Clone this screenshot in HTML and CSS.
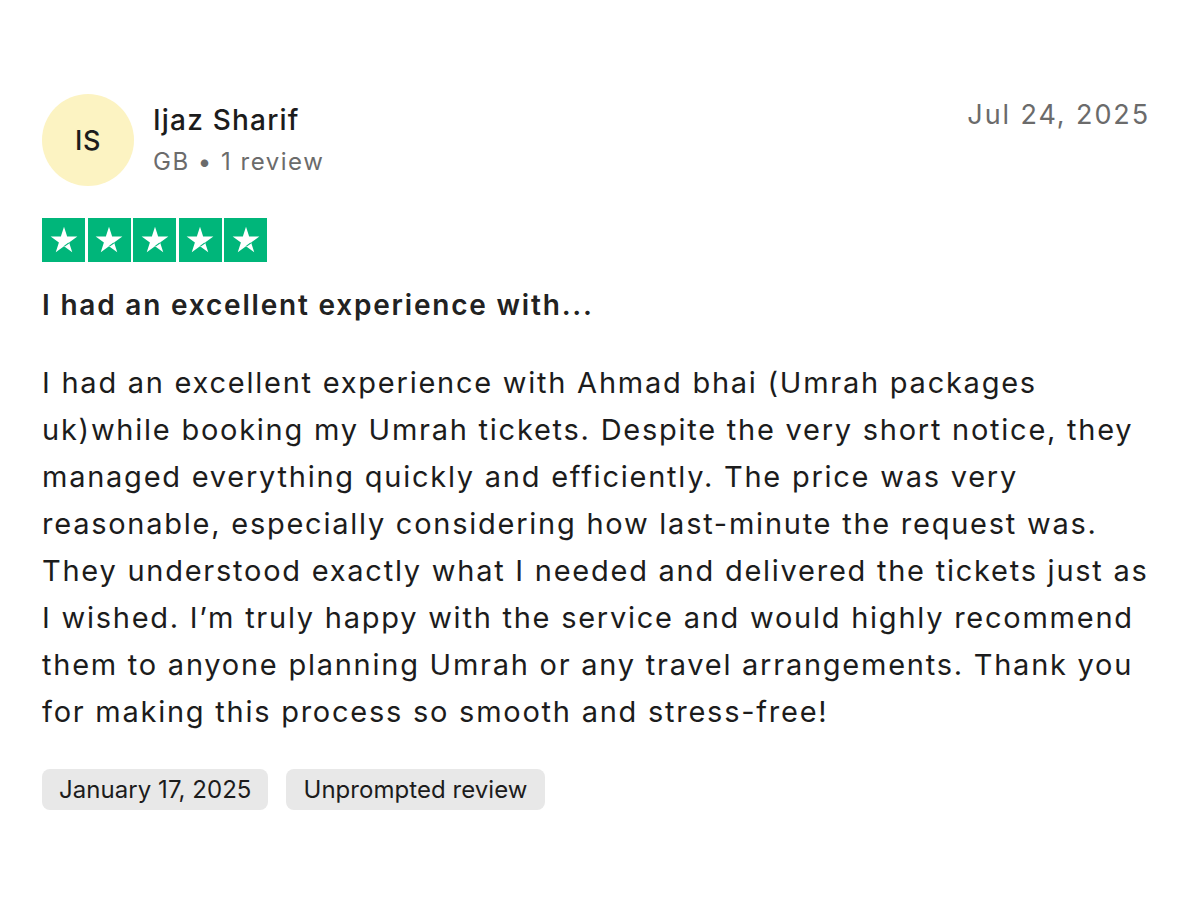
FILE: index.html
```html
<!DOCTYPE html>
<html lang="en">
<head>
<meta charset="utf-8">
<link rel="stylesheet" href="styles.css">
</head>
<body>
<article class="review">
  <header class="review-head">
    <div class="reviewer">
      <div class="avatar">IS</div>
      <div class="reviewer-info">
        <div class="name">Ijaz Sharif</div>
        <div class="meta">GB • 1 review</div>
      </div>
    </div>
    <time class="posted">Jul 24, 2025</time>
  </header>
  <div class="stars">
    <span class="star"><svg viewBox="0 0 24 24"><path d="M12 3.2l2.1 6.5h6.8l-5.5 4 2.1 6.5L12 16.2l-5.5 4 2.1-6.5-5.5-4h6.8z" fill="#fff"/><path d="M12.3 16.1L15.2 14" stroke="#00b67a" stroke-width="0.7"/></svg></span>
    <span class="star"><svg viewBox="0 0 24 24"><path d="M12 3.2l2.1 6.5h6.8l-5.5 4 2.1 6.5L12 16.2l-5.5 4 2.1-6.5-5.5-4h6.8z" fill="#fff"/><path d="M12.3 16.1L15.2 14" stroke="#00b67a" stroke-width="0.7"/></svg></span>
    <span class="star"><svg viewBox="0 0 24 24"><path d="M12 3.2l2.1 6.5h6.8l-5.5 4 2.1 6.5L12 16.2l-5.5 4 2.1-6.5-5.5-4h6.8z" fill="#fff"/><path d="M12.3 16.1L15.2 14" stroke="#00b67a" stroke-width="0.7"/></svg></span>
    <span class="star"><svg viewBox="0 0 24 24"><path d="M12 3.2l2.1 6.5h6.8l-5.5 4 2.1 6.5L12 16.2l-5.5 4 2.1-6.5-5.5-4h6.8z" fill="#fff"/><path d="M12.3 16.1L15.2 14" stroke="#00b67a" stroke-width="0.7"/></svg></span>
    <span class="star"><svg viewBox="0 0 24 24"><path d="M12 3.2l2.1 6.5h6.8l-5.5 4 2.1 6.5L12 16.2l-5.5 4 2.1-6.5-5.5-4h6.8z" fill="#fff"/><path d="M12.3 16.1L15.2 14" stroke="#00b67a" stroke-width="0.7"/></svg></span>
  </div>
  <h2 class="title">I had an excellent experience with...</h2>
  <p class="body">I had an excellent experience with Ahmad bhai (Umrah packages uk)while booking my Umrah tickets. Despite the very short notice, they managed everything quickly and efficiently. The price was very reasonable, especially considering how last-minute the request was. They understood exactly what I needed and delivered the tickets just as I wished. I’m truly happy with the service and would highly recommend them to anyone planning Umrah or any travel arrangements. Thank you for making this process so smooth and stress-free!</p>
  <div class="tags">
    <span class="tag">January 17, 2025</span>
    <span class="tag">Unprompted review</span>
  </div>
</article>
</body>
</html>
```

FILE: styles.css
```css
html, body {
  margin: 0;
  padding: 0;
  background: #ffffff;
}
body {
  font-family: Inter, "Noto Sans", sans-serif;
  color: #1c1c1c;
}
.review {
  padding: 94px 46px 0 42px;
}
.review-head {
  display: flex;
  justify-content: space-between;
  align-items: flex-start;
  margin-right: 4px;
}
.reviewer {
  display: flex;
  align-items: center;
  gap: 19px;
}
.avatar {
  width: 92px;
  height: 92px;
  border-radius: 50%;
  background: #fcf3c2;
  display: flex;
  align-items: center;
  justify-content: center;
  font-size: 27px;
  font-weight: 500;
  letter-spacing: 0.5px;
  color: #1c1c1c;
}
.reviewer-info {
  display: flex;
  flex-direction: column;
  gap: 8px;
}
.name {
  font-size: 28px;
  font-weight: 500;
  line-height: 36px;
  letter-spacing: 1.2px;
}
.meta {
  font-size: 24px;
  color: #6b6b6b;
  line-height: 32px;
  letter-spacing: 1.5px;
}
.posted {
  font-size: 27px;
  color: #6b6b6b;
  letter-spacing: 1.9px;
  margin-top: 4px;
}
.stars {
  display: flex;
  gap: 2.5px;
  margin-top: 32px;
}
.star {
  width: 43px;
  height: 44px;
  background: #00b67a;
  display: flex;
  align-items: center;
  justify-content: center;
}
.star svg {
  width: 36px;
  height: 36px;
}
.title {
  font-size: 28px;
  font-weight: 600;
  margin: 25px 0 0;
  line-height: 36px;
  letter-spacing: 1.8px;
  color: #222;
}
.body {
  font-size: 29px;
  line-height: 47px;
  margin: 36px 0 0;
  color: #1c1c1c;
  letter-spacing: 1.75px;
}
.tags {
  display: flex;
  gap: 18px;
  margin-top: 34px;
}
.tag {
  background: #e8e8e8;
  border-radius: 8px;
  font-size: 24px;
  line-height: 41px;
  padding: 0 17px;
  color: #1c1c1c;
  letter-spacing: 0.05px;
}
```
